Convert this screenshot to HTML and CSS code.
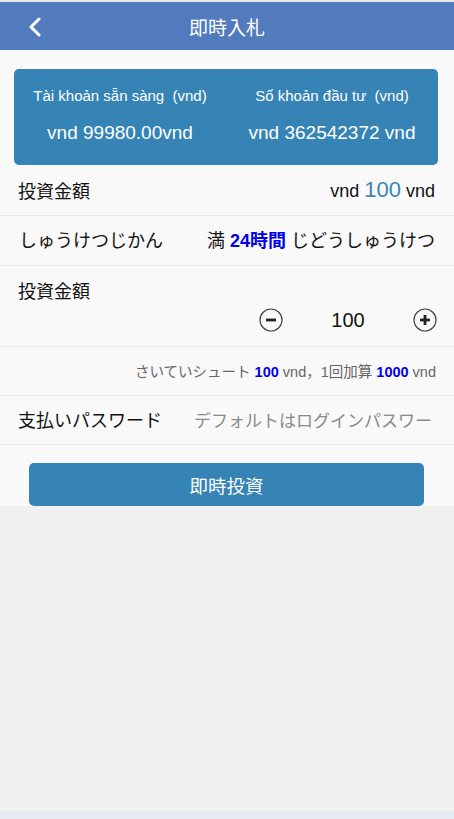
FILE: index.html
```html
<!DOCTYPE html>
<html lang="ja">
<head>
<meta charset="utf-8">
<link rel="stylesheet" href="styles.css">
</head>
<body>
<div class="topline"></div>
<header class="header">
  <span class="back">
    <svg width="14" height="20" viewBox="0 0 14 20"><path d="M11 2 L3 10 L11 18" fill="none" stroke="#fff" stroke-width="3" stroke-linecap="round" stroke-linejoin="round"/></svg>
  </span>
  <h1 class="title">即時入札</h1>
</header>
<main class="main">
  <section class="card">
    <div class="col">
      <div class="lbl">Tài khoản sẵn sàng&nbsp;&nbsp;(vnd)</div>
      <div class="val">vnd 99980.00vnd</div>
    </div>
    <div class="col">
      <div class="lbl">Số khoản đầu tư&nbsp;&nbsp;(vnd)</div>
      <div class="val">vnd 362542372 vnd</div>
    </div>
  </section>
  <div class="row r1">
    <span class="key">投資金額</span>
    <span class="amt">vnd <span class="big">100</span> vnd</span>
  </div>
  <div class="row r2">
    <span class="key kana">しゅうけつじかん</span>
    <span class="term">満 <b class="blue">24時間</b> じどうしゅうけつ</span>
  </div>
  <div class="row r3">
    <span class="key">投資金額</span>
    <div class="stepper">
      <span class="circ"><svg width="24" height="24" viewBox="0 0 24 24"><circle cx="12" cy="12" r="11" fill="none" stroke="#444" stroke-width="1.2"/><rect x="7" y="10.6" width="10" height="2.8" fill="#222"/></svg></span>
      <span class="num">100</span>
      <span class="circ"><svg width="24" height="24" viewBox="0 0 24 24"><circle cx="12" cy="12" r="11" fill="none" stroke="#444" stroke-width="1.2"/><rect x="7" y="10.6" width="10" height="2.8" fill="#222"/><rect x="10.6" y="7" width="2.8" height="10" fill="#222"/></svg></span>
    </div>
  </div>
  <div class="row r4">
    <span class="note">さいていシュート <b class="blue">100</b> vnd，1回加算 <b class="blue">1000</b> vnd</span>
  </div>
  <div class="row r5">
    <span class="key pw">支払いパスワード</span>
    <span class="ph">デフォルトはログインパスワー</span>
  </div>
  <div class="btnwrap">
    <button class="btn">即時投資</button>
  </div>
</main>
<div class="rest"></div>
<div class="bottom"></div>
</body>
</html>
```
FILE: styles.css
```css
* { box-sizing: border-box; }
html, body { margin: 0; padding: 0; }
body {
  font-family: "Liberation Sans", "Noto Sans CJK JP", sans-serif;
  background: #f0f0f0;
  width: 454px;
  height: 819px;
  overflow: hidden;
  display: flex;
  flex-direction: column;
  color: #111;
}
.topline { height: 2px; background: #e6e6e6; }
.header {
  height: 48px;
  background: #517bbd;
  display: flex;
  align-items: center;
  justify-content: center;
  position: relative;
}
.back { position: absolute; left: 28px; top: 15px; display: flex; }
.title { margin: 0; font-size: 19px; font-weight: normal; color: #fff; }
.main {
  background: #f9f9f9;
  padding-top: 19px;
  height: 456px;
}
.card {
  margin: 0 16px 0 14px;
  height: 96px;
  background: #3683b5;
  border-radius: 5px;
  display: flex;
  color: #fff;
}
.col { flex: 1; display: flex; flex-direction: column; align-items: center; }
.lbl { font-size: 15px; margin-top: 18px; height: 17px; }
.val { font-size: 19px; margin-top: 18px; }
.row {
  display: flex;
  align-items: center;
  justify-content: space-between;
  padding: 0 18px;
  border-bottom: 1px solid #e8e8e8;
}
.key { font-size: 18px; }
.r1 { height: 51px; padding-right: 19px; }
.amt { font-size: 18px; }
.big { font-size: 22px; color: #3a86b8; }
.r2 { height: 50px; padding-left: 19px; padding-right: 19px; padding-bottom: 3px; }
.kana { font-size: 18px; }
.term { font-size: 18px; }
.blue { color: #0000ee; }
.r3 {
  height: 81px;
  flex-direction: column;
  align-items: stretch;
  justify-content: flex-start;
  padding-top: 11px;
}
.stepper {
  display: flex;
  align-items: center;
  justify-content: flex-end;
  margin-top: 5px;
  margin-right: -1px;
}
.circ { display: flex; width: 24px; height: 24px; }
.num { font-size: 20px; width: 130px; text-align: center; }
.r4 { height: 49px; justify-content: flex-end; padding-right: 18px; padding-bottom: 2px; }
.note { font-size: 14.5px; color: #666; }
.note .blue { font-weight: bold; }
.r5 { height: 49px; justify-content: flex-start; padding-bottom: 2px; }
.pw { font-size: 18px; width: 176px; }
.ph { font-size: 17px; color: #8a8a8a; white-space: nowrap; overflow: hidden; }
.btnwrap { padding: 18px 30px 0 29px; }
.btn {
  width: 100%;
  height: 43px;
  border: none;
  border-radius: 5px;
  background: #3683b5;
  color: #fff;
  font-family: "Liberation Sans", "Noto Sans CJK JP", sans-serif;
  font-size: 18.5px;
  display: block;
}
.rest { flex: 1; }
.bottom { height: 8px; background: #e6eaf3; }
```
